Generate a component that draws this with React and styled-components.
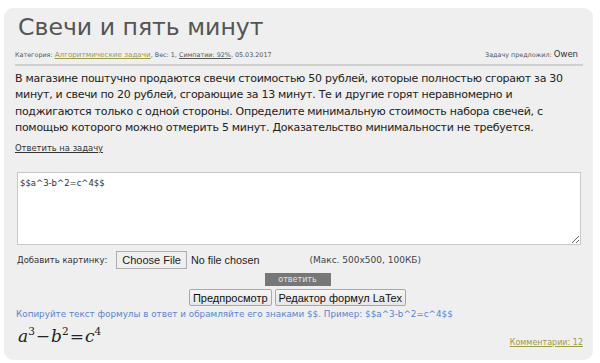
import React from 'react';
import styled, { createGlobalStyle } from 'styled-components';

const Global = createGlobalStyle`
  body {
    margin: 0;
    background: #fff;
    font-family: "DejaVu Sans", Verdana, sans-serif;
  }
`;

const Page = styled.div`
  padding: 8px 7px 3px 4px;
`;

const Card = styled.div`
  background: #efefef;
  border-radius: 9px;
  padding: 4px 10px 0 11px;
  height: 352px;
  box-sizing: border-box;
`;

const Title = styled.h1`
  margin: 0 0 0 3px;
  font-family: "DejaVu Sans", Verdana, sans-serif;
  font-weight: normal;
  font-size: 23.6px;
  color: #555;
  line-height: 30px;
`;

const Meta = styled.div`
  display: flex;
  justify-content: space-between;
  align-items: baseline;
  font-size: 6.4px;
  line-height: 9px;
  color: #555;
  margin-top: 8px;
  padding: 0 5px 4px 0;
  border-bottom: 2px solid #cfcfcf;
`;

const OliveLink = styled.a`
  color: #9c9c48;
  text-decoration: underline;
  font-size: ${p => p.$size || '9px'};
`;

const GreyLink = styled.a`
  color: #555;
  text-decoration: underline;
`;

const Author = styled.b`
  font-weight: normal;
  font-size: 8.5px;
  color: #333;
`;

const Body = styled.p`
  margin: 5px 0 0 0;
  font-size: 11px;
  letter-spacing: -0.28px;
  line-height: 16.3px;
  color: #222;
`;

const AnswerLink = styled.a`
  display: block;
  margin: 7px 0 0 0;
  font-size: 8.4px;
  line-height: 10px;
  color: #333;
  text-decoration: underline;
`;

const Area = styled.textarea`
  display: block;
  margin: 19px 0 0 2px;
  width: 564px;
  height: 73px;
  box-sizing: border-box;
  border: 1px solid #c8c8c8;
  padding: 5px 2px;
  font-family: "DejaVu Sans", Verdana, sans-serif;
  font-size: 8.5px;
  color: #333;
  resize: vertical;
  outline: none;
`;

const FileRow = styled.div`
  display: flex;
  align-items: center;
  height: 18px;
  margin: 6px 0 0 2px;
  font-size: 8.5px;
  color: #333;
`;

const FileButton = styled.span`
  margin-left: 9px;
  font-family: "Liberation Sans", Arial, sans-serif;
  font-size: 11px;
  color: #222;
  background: #efefef;
  border: 1px solid #adadad;
  padding: 0 5px;
  height: 16px;
  line-height: 16px;
`;

const FileNone = styled.span`
  margin-left: 4px;
  font-family: "Liberation Sans", Arial, sans-serif;
  font-size: 10.8px;
  color: #222;
`;

const Limit = styled.span`
  margin-left: 50px;
  font-size: 9px;
  color: #444;
`;

const Center = styled.div`
  display: flex;
  justify-content: center;
  gap: 3px;
  margin-top: ${p => p.$mt || 0}px;
  padding-right: 3px;
`;

const SendButton = styled.button`
  width: 66px;
  height: 13px;
  padding: 0;
  border: none;
  background: #777;
  color: #e3e3e3;
  font-family: "DejaVu Sans", Verdana, sans-serif;
  font-size: 8px;
  line-height: 13px;
`;

const GreyButton = styled.button`
  height: 17px;
  padding: 0 3px;
  font-family: "Liberation Sans", Arial, sans-serif;
  font-size: 11px;
  color: #111;
  background: linear-gradient(#f6f6f6, #e6e6e6);
  border: 1px solid #a9a9a9;
  border-radius: 2px;
`;

const Hint = styled.div`
  margin: 3px 0 0 1px;
  font-size: 8.8px;
  line-height: 10px;
  color: #5b83d4;
`;

const Bottom = styled.div`
  display: flex;
  justify-content: space-between;
  align-items: flex-end;
  margin: 1px 0 0 3px;
`;

const Formula = styled.div`
  font-family: "DejaVu Serif", "Liberation Serif", serif;
  font-style: italic;
  font-size: 17px;
  line-height: 22px;
  color: #222;
  sup {
    font-style: normal;
    font-size: 10.5px;
  }
  .op {
    font-style: normal;
    margin: 0 1px;
  }
`;

export default function App() {
  return (
    <Page>
      <Global />
      <Card>
        <Title>Свечи и пять минут</Title>
        <Meta>
          <span>
            Категория: <OliveLink $size="7.2px">Алгоритмические задачи</OliveLink>, Вес: 1,{' '}
            <GreyLink>Симпатии: 92%</GreyLink>, 05.03.2017
          </span>
          <span>
            Задачу предложил: <Author>Owen</Author>
          </span>
        </Meta>
        <Body>
          В магазине поштучно продаются свечи стоимостью 50 рублей, которые полностью сгорают за 30
          минут, и свечи по 20 рублей, сгорающие за 13 минут. Те и другие горят неравномерно и
          поджигаются только с одной стороны. Определите минимальную стоимость набора свечей, с
          помощью которого можно отмерить 5 минут. Доказательство минимальности не требуется.
        </Body>
        <AnswerLink>Ответить на задачу</AnswerLink>
        <Area defaultValue="$$a^3-b^2=c^4$$" />
        <FileRow>
          Добавить картинку:
          <FileButton>Choose File</FileButton>
          <FileNone>No file chosen</FileNone>
          <Limit>(Макс. 500x500, 100КБ)</Limit>
        </FileRow>
        <Center $mt={4}>
          <SendButton>ответить</SendButton>
        </Center>
        <Center $mt={3}>
          <GreyButton>Предпросмотр</GreyButton>
          <GreyButton>Редактор формул LaTex</GreyButton>
        </Center>
        <Hint>Копируйте текст формулы в ответ и обрамляйте его знаками $$. Пример: $$a^3-b^2=c^4$$</Hint>
        <Bottom>
          <Formula>
            a<sup>3</sup><span className="op">−</span>b<sup>2</sup>
            <span className="op">=</span>c<sup>4</sup>
          </Formula>
          <OliveLink $size="8px">Комментарии: 12</OliveLink>
        </Bottom>
      </Card>
    </Page>
  );
}
